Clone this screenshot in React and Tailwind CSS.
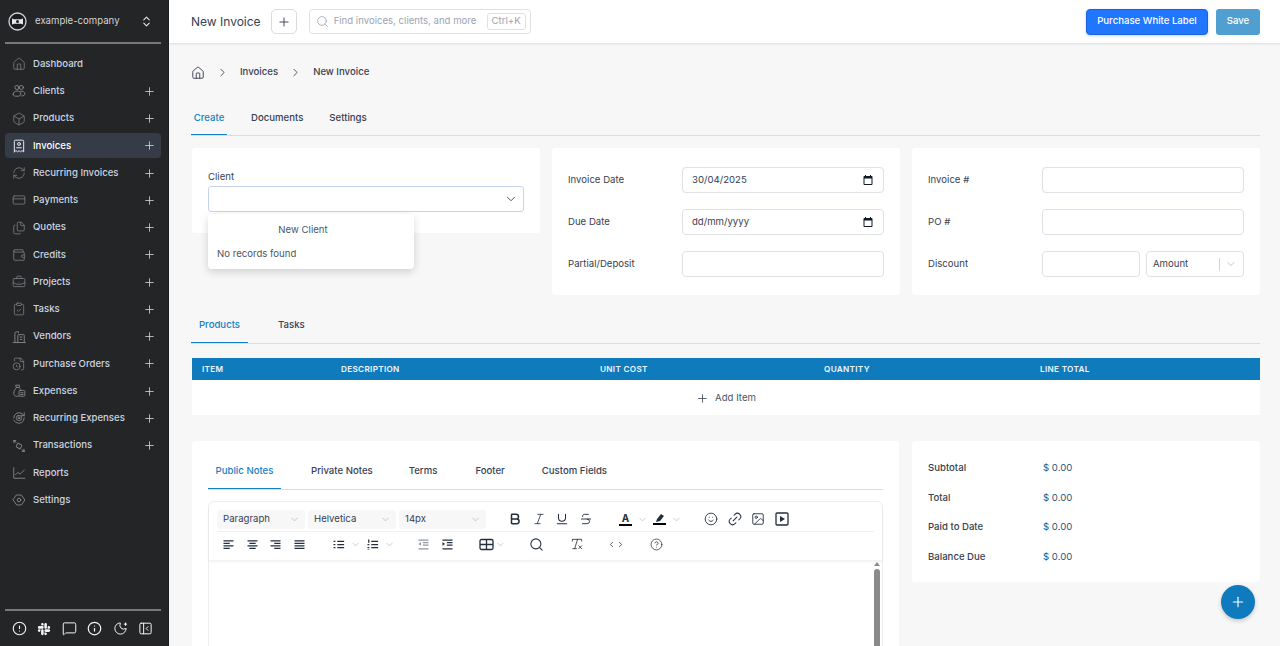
import React from 'react';
import {
  House, Box, RefreshCw, CreditCard, Files, Wallet, BriefcaseBusiness, ClipboardCheck, FileClock,
  Plus, ChevronDown, ChevronRight, ChevronsUpDown, Search, CircleAlert, MessageSquare, Info, MoonStar,
  Bold, Italic, Underline, Strikethrough, Smile, Link2, Image, RemoveFormatting, CircleHelp, ChevronLeft,
} from 'lucide-react';
import { FaSlack } from 'react-icons/fa';

const stroke = { fill: 'none', stroke: 'currentColor', strokeWidth: 1.6, strokeLinecap: 'round', strokeLinejoin: 'round' };

const Svg = ({ children, size = 15, className = '' }) => (
  <svg width={size} height={size} viewBox="0 0 24 24" className={className} {...stroke}>{children}</svg>
);

const ClientsIcon = (p) => (
  <Svg {...p}>
    <circle cx="8.5" cy="6" r="3.5" /><circle cx="16" cy="6" r="3.5" />
    <path d="M2 18c0-4 3-6 7-6s6 2 6 5-2 4-6 4-7-.5-7-3z" />
    <path d="M15 12.500c4-.8 7 1.200 7 4.500 0 2.500-2 3.500-5 3.500" />
  </Svg>
);
const InvoiceIcon = (p) => (
  <Svg {...p}>
    <path d="M4 22V4a2 2 0 0 1 2-2h12a2 2 0 0 1 2 2v18l-3-2-2.500 2-2.500-2-2.500 2L7 20z" />
    <circle cx="12" cy="8.500" r="2.500" /><path d="M8 15h8" />
  </Svg>
);
const VendorIcon = (p) => (
  <Svg {...p}>
    <path d="M5 21V6a3 3 0 0 1 3-3h3v2" /><path d="M10 21V9a1 1 0 0 1 1-1h9a1 1 0 0 1 1 1v12" />
    <path d="M2 21.500h21" /><path d="M14 12h3M14 16h3" />
  </Svg>
);
const ExpenseIcon = (p) => (
  <Svg {...p}>
    <path d="M7 2h6l-1 4H8z" /><path d="M8 6C5 9 3 12 3 16c0 3 2 5 5 5h3" />
    <path d="M12 6c1 1 2 2 2.500 3" /><rect x="12" y="11" width="10" height="10" rx="2" /><path d="M15 15h4M15 18h4" />
  </Svg>
);
const RecurExpenseIcon = (p) => (
  <Svg {...p}>
    <path d="M3 12a9 9 0 0 1 15-6.700L21 8" /><path d="M21 12a9 9 0 0 1-15 6.700L3 16" />
    <path d="M21 3v5h-5" /><rect x="7.500" y="8" width="9" height="8" rx="3" /><circle cx="12" cy="12" r="1.500" />
  </Svg>
);
const TransactionIcon = (p) => (
  <Svg {...p}>
    <rect x="8" y="8.500" width="8" height="7" rx="1.500" transform="rotate(30 12 12)" />
    <path d="M3 3l4 2.500M3 3l.5 3.500M3 3l3.500-.5" /><path d="M21 21l-4-2.500M21 21l-.5-3.500M21 21l-3.500.5" />
  </Svg>
);
const ReportIcon = (p) => (
  <Svg {...p}>
    <path d="M3 3v18h19" /><path d="M6 15l4-4 4 3 7-7" />
  </Svg>
);
const SettingsIcon = (p) => (
  <Svg {...p}>
    <path d="M8 3.500h8l6 8.500-6 8.500H8L2 12z" /><circle cx="12" cy="12" r="3" />
  </Svg>
);
const PanelIcon = (p) => (
  <Svg {...p}>
    <rect x="3" y="3.500" width="18" height="17" rx="2" /><path d="M9 3.500v17" /><path d="M16 9l-3 3 3 3" />
  </Svg>
);

const navItems = [
  { label: 'Dashboard', Icon: House },
  { label: 'Clients', Icon: ClientsIcon, add: true },
  { label: 'Products', Icon: Box, add: true },
  { label: 'Invoices', Icon: InvoiceIcon, add: true, active: true },
  { label: 'Recurring Invoices', Icon: RefreshCw, add: true },
  { label: 'Payments', Icon: CreditCard, add: true },
  { label: 'Quotes', Icon: Files, add: true },
  { label: 'Credits', Icon: Wallet, add: true },
  { label: 'Projects', Icon: BriefcaseBusiness, add: true },
  { label: 'Tasks', Icon: ClipboardCheck, add: true },
  { label: 'Vendors', Icon: VendorIcon, add: true },
  { label: 'Purchase Orders', Icon: FileClock, add: true },
  { label: 'Expenses', Icon: ExpenseIcon, add: true },
  { label: 'Recurring Expenses', Icon: RecurExpenseIcon, add: true },
  { label: 'Transactions', Icon: TransactionIcon, add: true },
  { label: 'Reports', Icon: ReportIcon },
  { label: 'Settings', Icon: SettingsIcon },
];

function Logo() {
  return (
    <svg width="19" height="19" viewBox="0 0 19 19">
      <circle cx="9.500" cy="9.500" r="8.500" fill="#1b1c1e" stroke="#d1d5db" strokeWidth="1.300" />
      <path d="M4 6.500l2 .8h7l2-.8v6l-2-.8H6l-2 .8z" fill="#e5e7eb" />
      <circle cx="9.500" cy="9.500" r="1.500" fill="#1b1c1e" />
    </svg>
  );
}

function Sidebar() {
  return (
    <aside className="w-[169px] shrink-0 h-full flex flex-col bg-[#242527] border-r border-[#1c1d1f]">
      <div className="h-[44px] shrink-0 ml-[5px] mr-[7px] pt-[1px] border-b-2 border-[#77787a] flex items-center pl-[3px] pr-[8px]">
        <Logo />
        <span className="ml-[8px] text-[9.600px] text-[#d1d5db]">example-company</span>
        <ChevronsUpDown size={13} className="ml-auto text-[#e5e7eb]" />
      </div>
      <nav className="flex-1 flex flex-col gap-[2.250px] pt-[7.500px] ml-[5px] mr-[7px]">
        {navItems.map(({ label, Icon, add, active }) => (
          <div
            key={label}
            className={`h-[25px] flex items-center rounded-[4px] pl-[7px] pr-[5px] ${active ? 'bg-[#363c47] text-white' : 'text-[#cbd5e1]'}`}
          >
            <Icon size={14} strokeWidth={1.3} className={active ? 'text-[#f3f4f6]' : 'text-[#84868a]'} />
            <span className="ml-[7px] text-[9.600px] font-medium">{label}</span>
            {add && <Plus size={13} strokeWidth={1.5} className="ml-auto text-[#d1d5db]" />}
          </div>
        ))}
      </nav>
      <div className="h-[37px] shrink-0 ml-[5px] mr-[7px] border-t-2 border-[#77787a] flex items-center justify-between pl-[7px] pr-[8px] text-[#f3f4f6]">
        <CircleAlert size={15} strokeWidth={1.8} />
        <FaSlack size={14} />
        <MessageSquare size={15} strokeWidth={1.6} />
        <Info size={15} strokeWidth={2} />
        <MoonStar size={15} strokeWidth={1.6} />
        <PanelIcon size={15} />
      </div>
    </aside>
  );
}

function Header() {
  return (
    <header className="h-[44px] shrink-0 bg-white border-b border-[#e3e4e6] shadow-[0_1px_2px_rgba(0,0,0,0.05)] flex items-center pl-[22px] pr-[20px]">
      <h1 className="text-[12px] text-[#374151]">New Invoice</h1>
      <button className="ml-[10px] w-[26px] h-[25px] rounded-[5px] border border-[#d9dbe0] flex items-center justify-center text-[#374151]">
        <Plus size={14} strokeWidth={1.6} />
      </button>
      <div className="ml-[12px] w-[222px] h-[25px] rounded-[4px] border border-[#dfe1e5] flex items-center pl-[6px] pr-[4px]">
        <Search size={13} strokeWidth={1.5} className="text-[#9ca3af]" />
        <span className="ml-[5px] text-[9.600px] text-[#9ca3af] whitespace-nowrap">Find invoices, clients, and more</span>
        <span className="ml-auto px-[4px] h-[17px] flex items-center rounded-[3px] border border-[#dfe1e5] text-[9.600px] text-[#9ca3af]">Ctrl+K</span>
      </div>
      <button className="ml-auto h-[26px] w-[122px] rounded-[4px] bg-[#2176ff] border border-[#1a63d8] shadow-[0_1px_3px_rgba(33,118,255,0.3)] text-white text-[9.600px] font-medium">
        Purchase White Label
      </button>
      <button className="ml-[8px] h-[26px] w-[44px] rounded-[3px] bg-[#519fd0] text-white text-[9.600px] font-medium">Save</button>
    </header>
  );
}

function Tab({ children, active, className = '' }) {
  return (
    <div className={`h-full flex items-center text-[9.600px] font-medium border-b ${active ? 'text-[#1580c4] border-[#1580c4]' : 'text-[#374151] border-transparent'} ${className}`}>
      {children}
    </div>
  );
}

function Field({ className = '', children }) {
  return (
    <div className={`h-[26px] bg-white border border-[#dfe1e6] rounded-[4px] flex items-center text-[9.600px] text-[#374151] ${className}`}>
      {children}
    </div>
  );
}

function CalendarGlyph() {
  return (
    <svg width="12" height="12" viewBox="0 0 24 24" className="text-[#111827]">
      <path fill="currentColor" d="M19 4h-1V2h-2v2H8V2H6v2H5a2 2 0 0 0-2 2v14a2 2 0 0 0 2 2h14a2 2 0 0 0 2-2V6a2 2 0 0 0-2-2zm0 16H5V9h14z" />
    </svg>
  );
}

const Label = ({ children }) => <span className="text-[9.600px] text-[#374151]">{children}</span>;

function InvoiceCards() {
  return (
    <div className="mt-[12px] grid grid-cols-3 gap-[12px] items-start">
      <div className="relative h-[85px] bg-white rounded-[3px] pt-[23px] px-[16px]">
        <div className="text-[9.600px] text-[#374151] leading-[12px]">Client</div>
        <div className="mt-[3px] h-[26px] bg-white border border-[#c6d3ee] rounded-[3px] flex items-center justify-end pr-[5px] text-[#374151]">
          <ChevronDown size={14} strokeWidth={1.5} />
        </div>
        <div className="absolute z-10 left-[16px] top-[66px] w-[206px] h-[55px] bg-white rounded-[4px] shadow-[0_3px_8px_rgba(0,0,0,0.16)] text-[9.600px] text-[#4b5563]">
          <div className="h-[32px] flex items-center justify-center pr-[16px]">New Client</div>
          <div className="h-[17px] flex items-center pl-[9px]">No records found</div>
        </div>
      </div>
      <div className="h-[147px] bg-white rounded-[3px] py-[19px] px-[16px] grid grid-cols-[114px_1fr] gap-y-[16px] items-center">
        <Label>Invoice Date</Label>
        <Field className="justify-between px-[9px]">30/04/2025<CalendarGlyph /></Field>
        <Label>Due Date</Label>
        <Field className="justify-between px-[9px]">dd/mm/yyyy<CalendarGlyph /></Field>
        <Label>Partial/Deposit</Label>
        <Field />
      </div>
      <div className="h-[147px] bg-white rounded-[3px] py-[19px] px-[16px] grid grid-cols-[114px_1fr] gap-y-[16px] items-center">
        <Label>Invoice #</Label>
        <Field />
        <Label>PO #</Label>
        <Field />
        <Label>Discount</Label>
        <div className="flex gap-[6px]">
          <Field className="w-[98px]" />
          <Field className="flex-1 pl-[6px] pr-[6px]">
            Amount
            <span className="ml-auto w-px h-[13px] bg-[#d1d5db]" />
            <ChevronDown size={12} strokeWidth={1.3} className="ml-[5px] text-[#9ca3af]" />
          </Field>
        </div>
      </div>
    </div>
  );
}

function ProductsTable() {
  const cols = ['ITEM', 'DESCRIPTION', 'UNIT COST', 'QUANTITY', 'LINE TOTAL'];
  return (
    <>
      <div className="mt-[12px] -ml-px h-[37px] pt-[2px] border-b border-[#dcdde0] flex">
        <Tab active className="w-[57px] justify-center">Products</Tab>
        <Tab className="ml-[30px]">Tasks</Tab>
      </div>
      <div className="mt-[14px]">
        <div className="h-[22px] bg-[#0f7abc] grid grid-cols-[139px_259px_224px_216px_1fr] items-center pl-[10px] text-[8.200px] font-semibold tracking-[0.3px] text-[#f0f7fc]">
          {cols.map((c) => <span key={c}>{c}</span>)}
        </div>
        <div className="h-[35px] pt-[2px] bg-white flex items-center justify-center gap-[6px] text-[9.600px] text-[#4b5563]">
          <Plus size={13} strokeWidth={1.5} className="text-[#374151]" />Add Item
        </div>
      </div>
    </>
  );
}

function Sel({ label, w }) {
  return (
    <div className={`h-[19px] rounded-[3px] bg-[#f7f7f8] flex items-center justify-between pl-[6px] pr-[5px] text-[9.600px] text-[#374151] ${w}`}>
      {label}<ChevronDown size={11} strokeWidth={1.3} className="text-[#9ca3af]" />
    </div>
  );
}

const Glyph = ({ children, size = 15 }) => (
  <svg width={size} height={size} viewBox="0 0 24 24" className="text-[#222f3e]" fill="currentColor">{children}</svg>
);

const lines = {
  left: 'M4 5h16v2H4zM4 9h10v2H4zM4 13h16v2H4zM4 17h10v2H4z',
  center: 'M4 5h16v2H4zM7 9h10v2H7zM4 13h16v2H4zM7 17h10v2H7z',
  right: 'M4 5h16v2H4zM10 9h10v2H10zM4 13h16v2H4zM10 17h10v2H10z',
  justify: 'M4 5h16v2H4zM4 9h16v2H4zM4 13h16v2H4zM4 17h16v2H4z',
  bullet: 'M10 6h11v2H10zM10 11h11v2H10zM10 16h11v2H10zM4 6h3v2H4zM4 11h3v2H4zM4 16h3v2H4z',
  number: 'M10 6h11v2H10zM10 11h11v2H10zM10 16h11v2H10zM5 4h2v5H5zM4 11h3v2H4zM4 16h3v2H4zM4 19h3v1H4z',
  outdent: 'M4 4h16v2H4zM11 8h9v2h-9zM11 12h9v2h-9zM4 18h16v2H4zM8 8v6l-4-3z',
  indent: 'M4 4h16v2H4zM11 8h9v2h-9zM11 12h9v2h-9zM4 18h16v2H4zM4 8v6l4-3z',
};

const Caret = ({ className = '' }) => <ChevronDown size={11} strokeWidth={1.2} className={`text-[#9ca3af] ${className}`} />;

function Editor() {
  return (
    <div className="mt-[11px] h-[200px] border border-[#eceef1] rounded-[6px] bg-white">
      <div className="h-[58px] rounded-t-[6px] shadow-[0_2px_3px_rgba(0,0,0,0.06)] px-[8px] pt-[8px] relative">
        <div className="h-[22px] flex items-center border-b border-[#eef0f2] pb-[3px] text-[#222f3e]">
          <div className="flex gap-[3px]">
            <Sel label="Paragraph" w="w-[88px]" />
            <Sel label="Helvetica" w="w-[88px]" />
            <Sel label="14px" w="w-[87px]" />
          </div>
          <div className="ml-[22px] flex items-center gap-[9.500px]">
            <Bold size={14} strokeWidth={2.6} />
            <Italic size={14} strokeWidth={1.4} />
            <Underline size={14} strokeWidth={1.8} />
            <Strikethrough size={14} strokeWidth={1.6} />
          </div>
          <div className="ml-[26px] flex items-center">
            <div className="w-[14px] flex flex-col items-center text-[10px] leading-[11px] font-bold">A<span className="w-[13px] h-[2px] bg-black" /></div>
            <Caret className="ml-[4px]" />
            <div className="ml-[4.500px] w-[14px] flex flex-col items-center">
              <svg width="11" height="9" viewBox="0 0 11 9"><path fill="#222f3e" d="M2 8l1-3 4-5 3 2-4 5z" /></svg>
              <span className="w-[13px] h-[2px] bg-black" />
            </div>
            <Caret className="ml-[4.500px]" />
          </div>
          <div className="ml-[22.500px] flex items-center gap-[9.500px]">
            <Smile size={14} strokeWidth={1.5} />
            <Link2 size={16} strokeWidth={1.5} className="-mx-px -rotate-45" />
            <Image size={14} strokeWidth={1.5} />
            <svg width="14" height="14" viewBox="0 0 14 14">
              <rect x="1" y="1" width="12" height="12" rx="1" fill="none" stroke="#222f3e" strokeWidth="1.300" />
              <path d="M5 4l5 3-5 3z" fill="#222f3e" />
            </svg>
          </div>
        </div>
        <div className="mt-[2px] h-[20px] flex items-center pl-[4px] text-[#222f3e]">
          <div className="flex items-center gap-[8.500px]">
            <Glyph><path d={lines.left} /></Glyph>
            <Glyph><path d={lines.center} /></Glyph>
            <Glyph><path d={lines.right} /></Glyph>
            <Glyph><path d={lines.justify} /></Glyph>
          </div>
          <div className="ml-[24.500px] flex items-center">
            <Glyph><path d={lines.bullet} /></Glyph>
            <Caret className="ml-[4px]" />
            <span className="ml-[4px]"><Glyph><path d={lines.number} /></Glyph></span>
            <Caret className="ml-[4px]" />
          </div>
          <div className="ml-[21px] flex items-center gap-[9px]">
            <span className="opacity-50"><Glyph><path d={lines.outdent} /></Glyph></span>
            <Glyph><path d={lines.indent} /></Glyph>
          </div>
          <div className="ml-[24px] flex items-center">
            <svg width="15" height="15" viewBox="0 0 15 15">
              <rect x="1" y="2.500" width="13" height="10" rx="1.500" fill="none" stroke="#222f3e" strokeWidth="1.300" />
              <path d="M1 7.500h13M7.500 2.500v10" stroke="#222f3e" strokeWidth="1.300" />
            </svg>
            <Caret className="ml-px" />
          </div>
          <Search size={15} strokeWidth={1.7} className="ml-[23px]" />
          <RemoveFormatting size={14} strokeWidth={1.4} className="ml-[25.500px]" />
          <span className="ml-[23px] flex"><ChevronLeft size={9} strokeWidth={2} /><ChevronRight size={9} strokeWidth={2} /></span>
          <CircleHelp size={13} strokeWidth={1.4} className="ml-[25.500px]" />
        </div>
      </div>
      <div className="relative h-[140px]">
        <div className="absolute right-[2px] top-[2px] w-[6px] flex flex-col items-center">
          <span className="w-0 h-0 border-x-[3px] border-x-transparent border-b-[4px] border-b-[#8a8a8a]" />
          <span className="mt-[3px] w-[6px] h-[100px] rounded-t-[3px] bg-[#8a8a8a]" />
        </div>
      </div>
    </div>
  );
}

function Notes() {
  return (
    <div className="bg-white rounded-[3px] px-[16px] h-[230px]">
      <div className="h-[49px] pt-[14px] border-b border-[#dcdde0] flex">
        <Tab active className="w-[73px] justify-center">Public Notes</Tab>
        <Tab className="ml-[30px]">Private Notes</Tab>
        <Tab className="ml-[36px]">Terms</Tab>
        <Tab className="ml-[38px]">Footer</Tab>
        <Tab className="ml-[37px]">Custom Fields</Tab>
      </div>
      <Editor />
    </div>
  );
}

function Totals() {
  const rows = ['Subtotal', 'Total', 'Paid to Date', 'Balance Due'];
  return (
    <div className="bg-white rounded-[3px] h-[141px] pt-[12.500px] px-[16px] flex flex-col">
      {rows.map((r) => (
        <div key={r} className="h-[29.600px] flex items-center text-[9.600px] font-medium">
          <span className="w-[115px] text-[#374151]">{r}</span>
          <span className="text-[#1f5a80] font-normal">$ 0.00</span>
        </div>
      ))}
    </div>
  );
}

export default function App() {
  return (
    <div className="h-screen w-full overflow-hidden flex bg-[#f7f7f7] font-['Inter',sans-serif]">
      <Sidebar />
      <div className="flex-1 min-w-0 h-full flex flex-col relative">
        <Header />
        <main className="flex-1 min-h-0 overflow-hidden pl-[23px] pr-[20px]">
          <div className="h-[56px] -ml-px flex items-center gap-[11px] pt-[1px] text-[9.600px] font-medium text-[#374151]">
            <House size={14} strokeWidth={1.6} />
            <ChevronRight size={13} strokeWidth={1.6} />
            <span>Invoices</span>
            <ChevronRight size={13} strokeWidth={1.6} />
            <span>New Invoice</span>
          </div>
          <div className="h-[36px] -ml-px pt-[2px] border-b border-[#dcdde0] flex">
            <Tab active className="w-[36px] justify-center">Create</Tab>
            <Tab className="ml-[24px]">Documents</Tab>
            <Tab className="ml-[26px]">Settings</Tab>
          </div>
          <InvoiceCards />
          <ProductsTable />
          <div className="mt-[26px] grid grid-cols-[707px_1fr] gap-[13px] items-start">
            <Notes />
            <Totals />
          </div>
        </main>
        <button className="absolute right-[25px] bottom-[27px] w-[34px] h-[34px] rounded-full bg-[#0f7abc] shadow-[0_2px_4px_rgba(0,0,0,0.2)] flex items-center justify-center text-white">
          <Plus size={16} strokeWidth={1.7} />
        </button>
      </div>
    </div>
  );
}
